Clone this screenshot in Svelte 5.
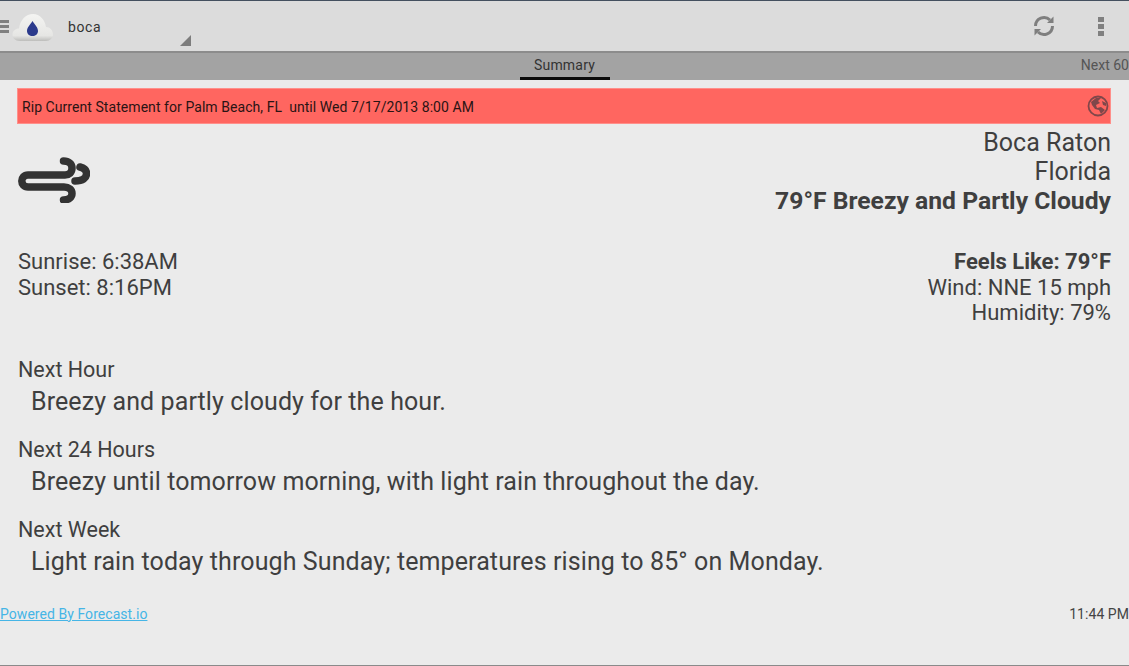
<script>
  const sections = [
    { title: 'Next Hour', body: 'Breezy and partly cloudy for the hour.' },
    { title: 'Next 24 Hours', body: 'Breezy until tomorrow morning, with light rain throughout the day.' },
    { title: 'Next Week', body: 'Light rain today through Sunday; temperatures rising to 85° on Monday.' }
  ];
</script>

<div class="screen">
  <header class="actionbar">
    <div class="burger"><i></i><i></i><i></i></div>
    <svg class="logo" width="42" height="30" viewBox="0 0 42 30">
      <defs>
        <linearGradient id="cl" x1="0" y1="0" x2="0" y2="1">
          <stop offset="0" stop-color="#f4f4f2"/>
          <stop offset="0.8" stop-color="#e6e6e4"/>
          <stop offset="1" stop-color="#bdbdbb"/>
        </linearGradient>
      </defs>
      <path d="M8 30 C3 30 0.5 27 0.5 23.5 C0.5 20 3.5 17.5 7 17.5 C8 9 14 3 21 3 C28 3 33 9 34 16 C38 16 41 19.5 41 23.5 C41 27 38 30 34 30 Z" fill="url(#cl)"/>
      <path d="M20.5 10 C23 14 26 16.5 26 20 C26 23 23.5 25 20.5 25 C17.5 25 15 23 15 20 C15 16.5 18 14 20.5 10 Z" fill="#2b3a8c"/>
    </svg>
    <div class="spinner">
      <span>boca</span>
      <svg class="corner" width="11" height="11" viewBox="0 0 11 11"><path d="M11 0V11H0Z" fill="#7d7d7d"/></svg>
    </div>
    <div class="actions">
      <svg width="22" height="22" viewBox="0 0 22 22" fill="none" stroke="#7f7f7f" stroke-width="3">
        <path d="M2.5 11 A8.5 8.5 0 0 1 17 5"/>
        <path d="M19.5 11 A8.5 8.5 0 0 1 5 17"/>
        <path d="M20.5 1.5V8H14Z" fill="#7f7f7f" stroke="none"/>
        <path d="M1.5 20.5V14H8Z" fill="#7f7f7f" stroke="none"/>
      </svg>
      <div class="overflow"><i></i><i></i><i></i></div>
    </div>
  </header>

  <nav class="tabs">
    <div class="tab"><span>Summary</span></div>
    <span class="next">Next 60</span>
  </nav>

  <main class="content">
    <div class="alert">
      <span class="alert-text">Rip Current Statement for Palm Beach, FL &nbsp;until Wed 7/17/2013 8:00 AM</span>
      <svg width="22" height="22" viewBox="0 0 22 22">
        <circle cx="11" cy="11" r="9.5" fill="none" stroke="#80474a" stroke-width="1.8"/>
        <path d="M4 7 L9 3 L14 3 L11 6 L13 8 L9 10 L10 13 L14 12 L18 15 L14 19 L12 15 L8 14 L5 10Z M15 6 L19 8 L19 11 L16 10Z" fill="#80474a"/>
      </svg>
    </div>

    <section class="top">
      <svg class="wind" width="72" height="46" viewBox="0 0 72 46" fill="none" stroke="#333" stroke-width="7.5" stroke-linecap="round">
        <path d="M45.5 4 C51 4 54 7 54 11 C54 15.5 51 18 47 18 H10 C6 18 3.8 21 3.8 24 C3.8 27 6 30 10 30 H46 C51 30 54 33 54 36.5 C54 40 51 43 45.5 43"/>
        <path d="M62 10 C66 11 68.5 13 68.5 16.5 C68.5 21 65 24 57 24"/>
      </svg>
      <div class="place">
        <div>Boca Raton</div>
        <div>Florida</div>
        <div class="strong wide">79°F Breezy and Partly Cloudy</div>
      </div>
    </section>

    <section class="details">
      <div class="sun">
        <div>Sunrise: 6:38AM</div>
        <div>Sunset: 8:16PM</div>
      </div>
      <div class="cond">
        <div class="strong">Feels Like: 79°F</div>
        <div>Wind: NNE 15 mph</div>
        <div>Humidity: 79%</div>
      </div>
    </section>

    <section class="forecast">
      {#each sections as s}
        <div class="block">
          <div class="title">{s.title}</div>
          <div class="body">{s.body}</div>
        </div>
      {/each}
    </section>

    <footer class="foot">
      <a href="#top">Powered By Forecast.io</a>
      <span>11:44 PM</span>
    </footer>
  </main>
</div>

<style>
  :global(body) {
    margin: 0;
    background: #ebebeb;
  }
  .screen {
    width: 1129px;
    height: 666px;
    box-sizing: border-box;
    border-top: 1px solid #44505f;
    border-bottom: 1px solid #8a8a8a;
    display: flex;
    flex-direction: column;
    overflow: hidden;
    font-family: Roboto, sans-serif;
    color: #3f3f3f;
    background: #ebebeb;
  }
  .actionbar {
    height: 52px;
    flex: none;
    display: flex;
    align-items: center;
    box-sizing: border-box;
    background: #dcdcdc;
    border-bottom: 2px solid #8c8c8c;
    position: relative;
  }
  .burger {
    width: 9px;
    display: flex;
    flex-direction: column;
    gap: 2px;
    margin-right: 3px;
  }
  .burger i {
    display: block;
    height: 3px;
    background: #808080;
  }
  .logo {
    flex: none;
  }
  .spinner {
    width: 125px;
    height: 50px;
    margin-left: 14px;
    position: relative;
    display: flex;
    align-items: center;
    font-size: 14px;
    letter-spacing: 0.6px;
    color: #333;
    box-sizing: border-box;
    padding-top: 2px;
  }
  .corner {
    position: absolute;
    right: 2px;
    bottom: 5px;
  }
  .actions {
    margin-left: auto;
    display: flex;
    align-items: center;
    gap: 43px;
    padding-right: 25px;
  }
  .overflow {
    display: flex;
    flex-direction: column;
    gap: 2px;
  }
  .overflow i {
    display: block;
    width: 6px;
    height: 5px;
    background: #808080;
  }
  .tabs {
    height: 27px;
    flex: none;
    background: #a3a3a3;
    position: relative;
    display: flex;
    justify-content: center;
    font-size: 14px;
    box-sizing: border-box;
  }
  .tab {
    width: 90px;
    height: 27px;
    display: flex;
    justify-content: center;
    align-items: center;
    border-bottom: 3px solid #0c0c0c;
    box-sizing: border-box;
    color: #333;
    letter-spacing: 0.2px;
  }
  .next {
    position: absolute;
    right: 0;
    top: 4px;
    font-size: 14px;
    color: #555;
    line-height: 16px;
  }
  .content {
    flex: 1;
    padding: 8px 18px 0;
    display: flex;
    flex-direction: column;
    min-height: 0;
  }
  .alert {
    height: 36px;
    flex: none;
    margin-left: -1px;
    background: #ff6660;
    border: 1px solid #ff8f8a;
    box-sizing: border-box;
    display: flex;
    justify-content: space-between;
    align-items: center;
    padding: 0 1px 0 4px;
    font-size: 14px;
    letter-spacing: 0.06px;
    color: #2a1414;
  }
  .alert-text {
    padding-top: 2px;
  }
  .top {
    display: flex;
    justify-content: space-between;
    margin-top: 4px;
  }
  .wind {
    margin-top: 29px;
  }
  .place {
    text-align: right;
    font-size: 25px;
    line-height: 29px;
  }
  .strong {
    font-weight: 700;
  }
  .wide {
    font-size: 24.7px;
  }
  .details {
    display: flex;
    justify-content: space-between;
    margin-top: 34px;
    font-size: 22px;
    line-height: 25.5px;
  }
  .cond {
    text-align: right;
  }
  .forecast {
    margin-top: 31px;
    display: flex;
    flex-direction: column;
    gap: 17px;
  }
  .title {
    font-size: 21.5px;
    line-height: 26px;
  }
  .body {
    font-size: 25px;
    line-height: 36px;
    padding-top: 1px;
    padding-left: 13px;
    letter-spacing: 0.1px;
  }
  .foot {
    display: flex;
    justify-content: space-between;
    align-items: center;
    margin: 25px -18px 0;
    font-size: 14px;
    line-height: 18px;
    letter-spacing: 0.05px;
  }
  .foot a {
    color: #45b5e6;
  }
  .foot span {
    color: #444;
  }
</style>
